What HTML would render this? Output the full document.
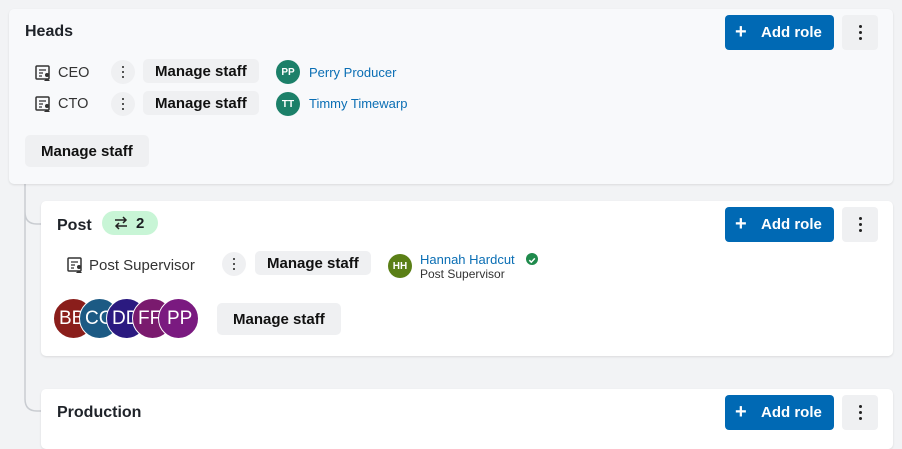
<!DOCTYPE html>
<html><head><style>
*{box-sizing:border-box;margin:0;padding:0}
body{width:902px;height:432px;background:#f2f3f5;font-family:"Liberation Sans",sans-serif;position:relative;overflow:hidden;color:#1a1d21}
.abs{position:absolute}
.card{position:absolute;border-radius:5px;box-shadow:0 1px 2px rgba(0,0,0,.1)}
.title{position:absolute;font-weight:bold;font-size:16px;color:#1f2329}
.add{position:absolute;width:109px;height:35px;background:#0069b4;border-radius:4px;color:#fff;font-weight:bold;font-size:15px;line-height:35px}
.add span.p{position:absolute;left:10px;font-size:20px;font-weight:bold}
.add span.t{position:absolute;left:36px}
.keb{position:absolute;width:36px;height:35px;background:#eff0f2;border-radius:4px}
.dots{position:absolute;left:50%;top:50%;width:3px;height:3px;margin-left:-1.5px;margin-top:-1.5px;background:#222;border-radius:50%;box-shadow:0 -6px 0 #222,0 6px 0 #222}
.ms{position:absolute;height:24px;background:#eff0f2;border-radius:5px;font-weight:bold;font-size:15px;line-height:25px;padding:0 12px;color:#111}
.ms.big{height:32px;line-height:33px;padding:0 16px}
.rk{position:absolute;width:24px;height:24px;background:#eff0f2;border-radius:50%}
.rk .dots{width:2.6px;height:2.6px;box-shadow:0 -5px 0 #222,0 5px 0 #222}
.av{position:absolute;width:24px;height:24px;border-radius:50%;color:#fff;font-size:10px;font-weight:bold;text-align:center;line-height:25px}
.name{position:absolute;color:#0a6eb4;font-size:13px}
.role{position:absolute;font-size:14.5px;color:#333}
.big-av{position:absolute;width:41px;height:41px;border-radius:50%;color:#fff;font-size:19px;line-height:39px;padding-left:5px;overflow:hidden;white-space:nowrap;border:1.5px solid #fff}
</style></head><body>
<svg class="abs" style="left:0;top:0" width="902" height="432">
<path d="M25 184 V212 Q25 224 37 224 H41 M25 212 V399 Q25 411 37 411 H41" fill="none" stroke="#c9ccd1" stroke-width="1.5"/>
</svg>

<div class="card" style="left:9px;top:9px;width:884px;height:175px;background:#f8f9fb"></div>
<div class="title" style="left:25px;top:23px">Heads</div>
<div class="add" style="left:725px;top:15px"><span class="p">+</span><span class="t">Add role</span></div>
<div class="keb" style="left:842px;top:15px"><div class="dots"></div></div>

<svg class="abs" style="left:35px;top:65px" width="17" height="17" viewBox="0 0 17 17"><rect x="1" y="1" width="13" height="13" rx="1" fill="none" stroke="#333" stroke-width="1.5"/><path d="M4 5h7M4 8h4M4 11h3" stroke="#333" stroke-width="1.3"/><circle cx="12" cy="10" r="2" fill="#333"/><path d="M9 16q3-4 6 0z" fill="#333"/></svg>
<div class="role" style="left:58px;top:65px">CEO</div>
<div class="rk" style="left:111px;top:60px"><div class="dots"></div></div>
<div class="ms" style="left:143px;top:59px">Manage staff</div>
<div class="av" style="left:276px;top:60px;background:#1c8069">PP</div>
<div class="name" style="left:309px;top:65px">Perry Producer</div>

<svg class="abs" style="left:35px;top:96px" width="17" height="17" viewBox="0 0 17 17"><rect x="1" y="1" width="13" height="13" rx="1" fill="none" stroke="#333" stroke-width="1.5"/><path d="M4 5h7M4 8h4M4 11h3" stroke="#333" stroke-width="1.3"/><circle cx="12" cy="10" r="2" fill="#333"/><path d="M9 16q3-4 6 0z" fill="#333"/></svg>
<div class="role" style="left:58px;top:96px">CTO</div>
<div class="rk" style="left:111px;top:92px"><div class="dots"></div></div>
<div class="ms" style="left:143px;top:91px">Manage staff</div>
<div class="av" style="left:276px;top:92px;background:#1c8069">TT</div>
<div class="name" style="left:309px;top:96px">Timmy Timewarp</div>

<div class="ms big" style="left:25px;top:135px">Manage staff</div>

<div class="card" style="left:41px;top:201px;width:852px;height:155px;background:#fff"></div>
<div class="title" style="left:57px;top:217px">Post</div>
<div class="abs" style="left:102px;top:211px;width:56px;height:24px;background:#c8f5d6;border-radius:12px;font-weight:bold;font-size:15px;line-height:25px;color:#1a1d21">
<svg class="abs" style="left:11px;top:5px" width="16" height="14" viewBox="0 0 16 14"><path d="M2 4h11M10 1l3 3-3 3M14 10H3M6 7l-3 3 3 3" fill="none" stroke="#222" stroke-width="1.5"/></svg>
<span class="abs" style="left:34px">2</span></div>
<div class="add" style="left:725px;top:207px"><span class="p">+</span><span class="t">Add role</span></div>
<div class="keb" style="left:842px;top:207px"><div class="dots"></div></div>

<svg class="abs" style="left:67px;top:257px" width="17" height="17" viewBox="0 0 17 17"><rect x="1" y="1" width="13" height="13" rx="1" fill="none" stroke="#333" stroke-width="1.5"/><path d="M4 5h7M4 8h4M4 11h3" stroke="#333" stroke-width="1.3"/><circle cx="12" cy="10" r="2" fill="#333"/><path d="M9 16q3-4 6 0z" fill="#333"/></svg>
<div class="role" style="left:89px;top:257px;font-size:15px">Post Supervisor</div>
<div class="rk" style="left:222px;top:252px"><div class="dots"></div></div>
<div class="ms" style="left:255px;top:251px">Manage staff</div>
<div class="av" style="left:388px;top:254px;background:#5a7f16">HH</div>
<div class="name" style="left:420px;top:252px">Hannah Hardcut</div>
<div class="abs" style="left:526px;top:253px;width:12px;height:12px;border-radius:50%;background:#1f8a4c"><svg width="12" height="12"><path d="M3.3 6.2l2 2 3.5-3.8" fill="none" stroke="#fff" stroke-width="1.5"/></svg></div>
<div class="abs" style="left:420px;top:267px;font-size:12px;color:#333">Post Supervisor</div>

<div class="big-av" style="left:53px;top:298px;background:#8a1e1b">BB</div>
<div class="big-av" style="left:79px;top:298px;background:#1c5a84">CC</div>
<div class="big-av" style="left:106px;top:298px;background:#2b1a80">DD</div>
<div class="big-av" style="left:132px;top:298px;background:#7a1a6e">FF</div>
<div class="big-av" style="left:158px;top:298px;background:#7a1a80;padding-left:8px">PP</div>
<div class="ms big" style="left:217px;top:303px">Manage staff</div>

<div class="card" style="left:41px;top:389px;width:852px;height:60px;background:#fff"></div>
<div class="title" style="left:57px;top:404px">Production</div>
<div class="add" style="left:725px;top:395px"><span class="p">+</span><span class="t">Add role</span></div>
<div class="keb" style="left:842px;top:395px"><div class="dots"></div></div>
</body></html>
